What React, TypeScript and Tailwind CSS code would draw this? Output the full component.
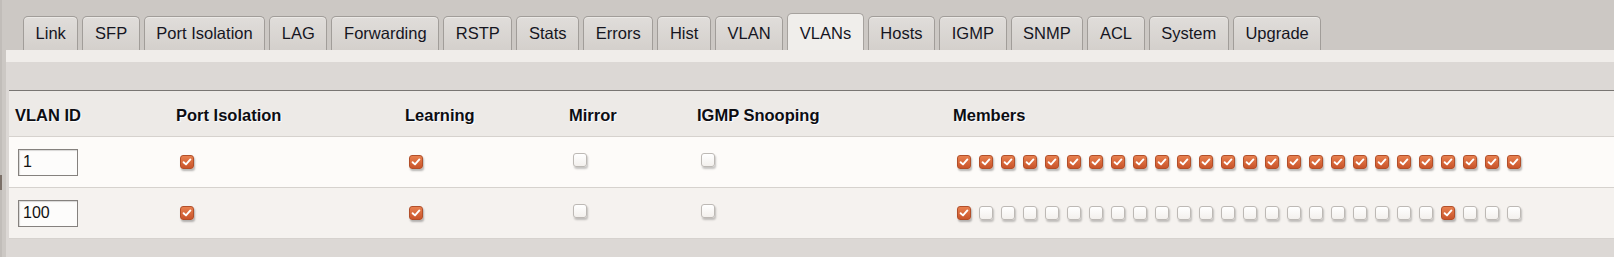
import React from "react";

const tabs = [
  "Link", "SFP", "Port Isolation", "LAG", "Forwarding", "RSTP", "Stats", "Errors", "Hist",
  "VLAN", "VLANs", "Hosts", "IGMP", "SNMP", "ACL", "System", "Upgrade",
];

function Check({ on }: { on: boolean }) {
  if (on) {
    return (
      <span className="inline-flex w-[14px] h-[14px] shrink-0 items-center justify-center rounded-[3px] border border-[#b24f2a] bg-gradient-to-b from-[#e8804f] to-[#c9542a] shadow-[1px_2px_2px_rgba(0,0,0,0.28)]">
        <svg width="10" height="10" viewBox="0 0 10 10">
          <path d="M1.6 5.2 L4 7.4 L8.4 2.4" fill="none" stroke="#fff" strokeWidth="1.9" strokeLinecap="round" strokeLinejoin="round" />
        </svg>
      </span>
    );
  }
  return (
    <span className="inline-block w-[14px] h-[14px] shrink-0 rounded-[3px] border border-[#bdb9b5] bg-gradient-to-b from-[#ffffff] to-[#f3f0ed] shadow-[1px_2px_2px_rgba(0,0,0,0.22)]" />
  );
}

const row1 = Array.from({ length: 26 }, () => true);
const row2 = Array.from({ length: 26 }, (_, i) => i === 0 || i === 22);

function Row({ id, iso, learn, mirror, igmp, members, bg }: { id: string; iso: boolean; learn: boolean; mirror: boolean; igmp: boolean; members: boolean[]; bg: string }) {
  return (
    <div className={`grid grid-cols-[161px_229px_164px_128px_256px_1fr] items-center h-[51px] border-b border-[#d6d2ce] ${bg}`}>
      <div className="pl-[9px]">
        <div className="w-[60px] h-[27px] border border-[#85817e] bg-[#fdfcfb] shadow-[inset_1px_1px_1px_rgba(0,0,0,0.15)] pl-[4px] flex items-center text-[16px] text-[#111]">
          {id}
        </div>
      </div>
      <div className="pl-[10px]"><Check on={iso} /></div>
      <div className="pl-[10px]"><Check on={learn} /></div>
      <div className="pl-[10px]"><Check on={mirror} /></div>
      <div className="pl-[10px]"><Check on={igmp} /></div>
      <div className="pl-[10px] flex gap-[8px]">
        {members.map((m, i) => (
          <Check key={i} on={m} />
        ))}
      </div>
    </div>
  );
}

export default function App() {
  return (
    <div className="w-[1614px] h-[257px] overflow-hidden flex bg-[#ccc8c4] font-['Liberation_Sans',Arial,sans-serif]">
      <div className="w-[2px] shrink-0 bg-[#c1bdb9]">
        <div className="mt-[175px] h-[15px] bg-[#7b6f67]" />
      </div>
      <div className="flex-1 flex flex-col pl-[4px] min-w-0">
        <div className="h-[50px] flex items-end gap-[4px] pl-[17px]">
          {tabs.map((t) =>
            t === "VLANs" ? (
              <div key={t} className="h-[37px] px-[11.6px] pt-[3px] flex items-center rounded-t-[5px] border border-b-0 border-[#a6a29e] bg-[#f0eeeb] text-[16.5px] text-[#15151f]">
                {t}
              </div>
            ) : (
              <div key={t} className="h-[34px] px-[11.6px] flex items-center rounded-t-[5px] border border-b-0 border-[#a19d99] bg-gradient-to-b from-[#e0ddda] to-[#d4d0cc] shadow-[inset_0_1px_0_#ebe9e6] text-[16.5px] text-[#15151f]">
                {t}
              </div>
            )
          )}
        </div>
        <div className="flex-1 bg-[#dcd8d5] flex flex-col">
          <div className="h-[12px] bg-[#f0edea]" />
          <div className="h-[28px]" />
          <div className="ml-[3px] border-t border-[#797673]">
            <div className="grid grid-cols-[161px_229px_164px_128px_256px_1fr] items-center h-[46px] pt-[4px] bg-[#edeae7] border-b border-[#d6d2ce] text-[16.5px] font-bold text-[#0d0d12] [text-shadow:1px_1px_1px_#ffffff]">
              <div className="pl-[6px]">VLAN ID</div>
              <div className="pl-[6px]">Port Isolation</div>
              <div className="pl-[6px]">Learning</div>
              <div className="pl-[6px]">Mirror</div>
              <div className="pl-[6px]">IGMP Snooping</div>
              <div className="pl-[6px]">Members</div>
            </div>
            <Row id="1" iso learn mirror={false} igmp={false} members={row1} bg="bg-[#fdfbf9]" />
            <Row id="100" iso learn mirror={false} igmp={false} members={row2} bg="bg-[#f5f2ef]" />
          </div>
        </div>
      </div>
    </div>
  );
}
